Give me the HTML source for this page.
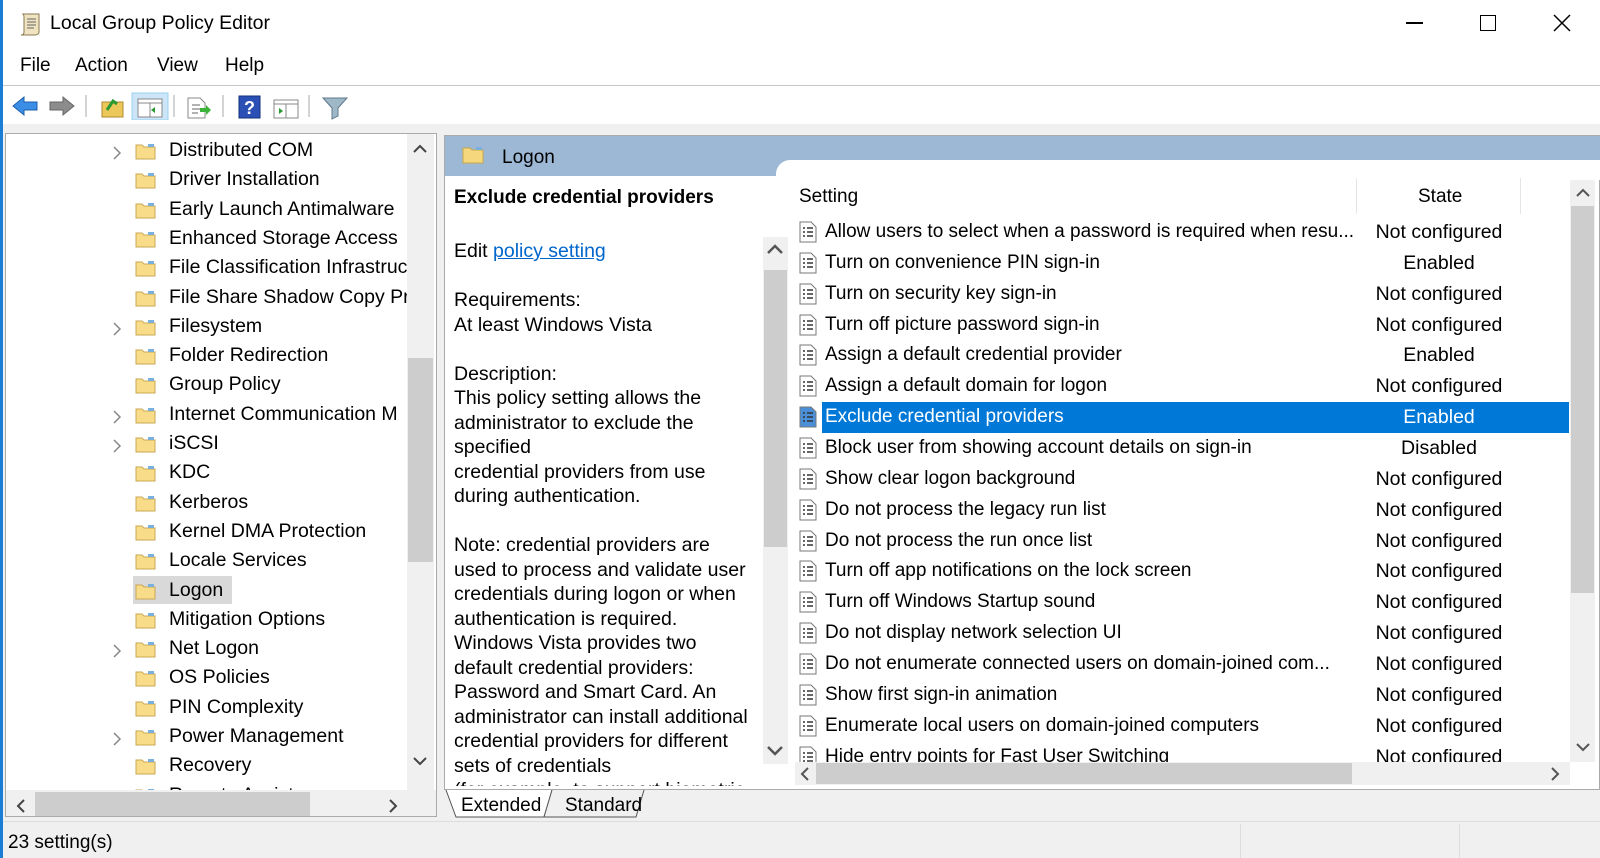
<!DOCTYPE html>
<html><head><meta charset="utf-8"><style>
*{margin:0;padding:0;box-sizing:border-box}
body{width:1600px;height:858px;overflow:hidden;background:#f0f0f0;font-family:"Liberation Sans",sans-serif;font-size:17.5px;color:#000;position:relative}
.a{position:absolute;white-space:nowrap}
.fold{position:absolute;width:21px;height:18px}
.sb{position:absolute;background:#f0f0f0}
.th{position:absolute;background:#cdcdcd}
</style></head><body>
<div class="a" style="left:0;top:0;width:1600px;height:124px;background:#fff"></div>
<div class="a" style="left:0;top:0;width:3px;height:858px;background:#1a7fd4"></div>
<svg class="a" style="left:17px;top:11px" width="26" height="26" viewBox="0 0 26 26"><path d="M6 3h16v18c0 2-2 3-4 3H4c2 0 3-1 3-3V6C7 4 6 3 6 3z" fill="#efe3c0" stroke="#8a7a50"/><path d="M10 8h9M10 11h9M10 14h9M10 17h7" stroke="#666"/></svg>
<div class="a" style="left:50px;top:12px;font-size:19.5px">Local Group Policy Editor</div>
<div class="a" style="left:1406px;top:22px;width:17px;height:1.5px;background:#000"></div>
<div class="a" style="left:1480px;top:15px;width:16px;height:16px;border:1.5px solid #000"></div>
<svg class="a" style="left:1553px;top:14px" width="18" height="18"><path d="M1 1L17 17M17 1L1 17" stroke="#000" stroke-width="1.5"/></svg>
<div class="a" style="left:20px;top:55px;font-size:19px">File</div>
<div class="a" style="left:75px;top:55px;font-size:19px">Action</div>
<div class="a" style="left:157px;top:55px;font-size:19px">View</div>
<div class="a" style="left:225px;top:55px;font-size:19px">Help</div>
<div class="a" style="left:3px;top:85px;width:1597px;height:1px;background:#c8c8c8"></div>
<svg class="a" style="left:10px;top:92px" width="345" height="28" viewBox="0 0 345 28">
<path d="M3 14l11-9v5h13v8H14v5z" fill="#3a8ee6" stroke="#1d5fae"/>
<path d="M64 14L53 5v5H40v8h13v5z" fill="#8c8c8c" stroke="#666"/>
<path d="M76 3v22" stroke="#aaa"/>
<rect x="92" y="10" width="21" height="15" fill="#ecc75a" stroke="#b08a30"/><path d="M97 18l6-9 4 3" stroke="#2a9a30" stroke-width="3" fill="none"/>
<rect x="122" y="1" width="36" height="27" fill="#cde6f7" stroke="#99d0f0"/><rect x="128" y="7" width="24" height="18" fill="#fff" stroke="#888"/><path d="M128 11h24M140 11v14" stroke="#888"/><path d="M145 15l-4 3 4 3z" fill="#2a9a30"/>
<path d="M164 3v22" stroke="#aaa"/>
<path d="M178 6h12l5 5v15h-17z" fill="#fff" stroke="#888"/><path d="M182 13h8M182 17h8M182 21h6" stroke="#666"/><path d="M190 16h6v-3l5 5-5 5v-3h-6z" fill="#3bb33b"/>
<path d="M213 3v22" stroke="#aaa"/>
<rect x="229" y="4" width="21" height="22" fill="#2a4fb5" stroke="#12307a"/><text x="234" y="22" fill="#fff" font-size="18" font-weight="bold" font-family="Liberation Sans">?</text>
<rect x="264" y="8" width="24" height="18" fill="#fff" stroke="#888"/><path d="M264 12h24M276 12v14" stroke="#888"/><path d="M269 16l4 3-4 3z" fill="#2a9a30"/>
<path d="M299 3v22" stroke="#aaa"/>
<path d="M313 6h24l-9 10v8l-6 3V16z" fill="#9fb8c8" stroke="#5f7a8c"/>
</svg>
<div class="a" style="left:5px;top:133px;width:432px;height:684px;background:#fff;border:1px solid #aaa;overflow:hidden">
 <div class="a" style="left:127px;top:442px;width:99px;height:28px;background:#d9d9d9"></div>
 <div id="tree"></div>
</div>
<div class="a" style="left:444px;top:135px;width:1156px;height:655px;background:#fff;border:1px solid #aaa"></div>
<div class="a" style="left:445px;top:136px;width:1155px;height:40px;background:#9cb8d5"></div>
<div class="a" style="left:776px;top:160px;width:824px;height:20px;background:#fff;border-top-left-radius:14px"></div>
<svg class="a" style="left:462px;top:145px" width="22" height="19"><path d="M1 3h7l2 2h11v13H1z" fill="#f5d77e" stroke="#c9a74a"/><rect x="14" y="2" width="6" height="3" fill="#7ab0e0"/></svg>
<div class="a" style="left:502px;top:147px;font-size:19px">Logon</div>
<div class="a" style="left:454px;top:187px;font-weight:bold;font-size:19px">Exclude credential providers</div>
<div class="a" style="left:454px;top:240px;font-size:19.5px">Edit <span style="color:#0066cc;text-decoration:underline">policy setting </span></div>
<div class="a" style="left:454px;top:288px;width:305px;height:498px;overflow:hidden;font-size:19.5px;line-height:24.5px">Requirements:<br>At least Windows Vista<br><br>Description:<br>This policy setting allows the<br>administrator to exclude the<br>specified<br>credential providers from use<br>during authentication.<br><br>Note: credential providers are<br>used to process and validate user<br>credentials during logon or when<br>authentication is required.<br>Windows Vista provides two<br>default credential providers:<br>Password and Smart Card. An<br>administrator can install additional<br>credential providers for different<br>sets of credentials<br>(for example, to support biometric</div>
<div class="sb" style="left:763px;top:237px;width:25px;height:527px"></div>
<div class="th" style="left:764px;top:270px;width:23px;height:277px"></div>
<svg class="a" style="left:766px;top:242px" width="18" height="14"><path d="M2 11l7-7 7 7" stroke="#555" stroke-width="2.5" fill="none"/></svg>
<svg class="a" style="left:766px;top:744px" width="18" height="14"><path d="M2 3l7 7 7-7" stroke="#555" stroke-width="2.5" fill="none"/></svg>
<div class="a" style="left:799px;top:186px;font-size:19px">Setting</div>
<div class="a" style="left:1418px;top:186px;font-size:19px">State</div>
<div class="a" style="left:1356px;top:178px;width:1px;height:36px;background:#e5e5e5"></div>
<div class="a" style="left:1520px;top:178px;width:1px;height:36px;background:#e5e5e5"></div>
<div class="a" style="left:795px;top:216px;width:774px;height:546px;overflow:hidden">
 <div class="a" style="left:27px;top:186px;width:747px;height:31px;background:#0078d7"></div>
 <div id="list"></div>
</div>
<div class="sb" style="left:1570px;top:180px;width:25px;height:582px"></div>
<div class="th" style="left:1571px;top:206px;width:23px;height:387px"></div>
<svg class="a" style="left:1574px;top:186px" width="18" height="14"><path d="M3 10l6-6 6 6" stroke="#555" stroke-width="2" fill="none"/></svg>
<svg class="a" style="left:1574px;top:740px" width="18" height="14"><path d="M3 4l6 6 6-6" stroke="#555" stroke-width="2" fill="none"/></svg>
<div class="sb" style="left:795px;top:762px;width:775px;height:23px"></div>
<div class="th" style="left:816px;top:763px;width:536px;height:21px"></div>
<svg class="a" style="left:799px;top:766px" width="12" height="16"><path d="M9 2L3 8l6 6" stroke="#555" stroke-width="2" fill="none"/></svg>
<svg class="a" style="left:1549px;top:766px" width="12" height="16"><path d="M3 2l6 6-6 6" stroke="#555" stroke-width="2" fill="none"/></svg>
<svg class="a" style="left:444px;top:790px" width="225" height="30"><path d="M2 0l10 27h88l8-27" fill="#fff" stroke="#555"/><path d="M108 0l-8 27h92l8-27" fill="#f0f0f0" stroke="#555"/></svg>
<div class="a" style="left:461px;top:795px;font-size:19px">Extended</div>
<div class="a" style="left:565px;top:795px;font-size:19px">Standard</div>
<div class="a" style="left:3px;top:821px;width:1597px;height:1px;background:#ddd"></div>
<div class="a" style="left:1240px;top:824px;width:1px;height:34px;background:#ddd"></div>
<div class="a" style="left:1459px;top:824px;width:1px;height:34px;background:#ddd"></div>
<div class="a" style="left:8px;top:832px;font-size:19px">23 setting(s)</div>
<script>
var t=[["Distributed COM",1],["Driver Installation"],["Early Launch Antimalware"],["Enhanced Storage Access"],["File Classification Infrastruct"],["File Share Shadow Copy Pro"],["Filesystem",1],["Folder Redirection"],["Group Policy"],["Internet Communication M",1],["iSCSI",1],["KDC"],["Kerberos"],["Kernel DMA Protection"],["Locale Services"],["Logon"],["Mitigation Options"],["Net Logon",1],["OS Policies"],["PIN Complexity"],["Power Management",1],["Recovery"],["Remote Assistance"]];
var h='';t.forEach(function(e,i){var y=3+i*29.3;
if(e[1])h+='<svg class="a" style="left:106px;top:'+(y+9)+'px" width="10" height="14"><path d="M2 1l6 6-6 6" stroke="#888" stroke-width="1.5" fill="none"/></svg>';
h+='<svg class="fold" style="left:129px;top:'+(y+5)+'px" viewBox="0 0 21 18"><path d="M1 3h6l2 2h11v12H1z" fill="#f8dc8a" stroke="#caa750"/><rect x="13" y="2" width="6" height="3" fill="#7ab0e0"/></svg>';
h+='<div class="a" style="left:163px;top:'+(y+2)+'px;font-size:19.5px;width:238px;overflow:hidden">'+e[0]+'</div>';});
h+='<div class="sb" style="left:401px;top:0;width:27px;height:656px"></div><div class="th" style="left:402px;top:224px;width:25px;height:204px"></div>';
h+='<svg class="a" style="left:405px;top:9px" width="18" height="12"><path d="M3 9l6-6 6 6" stroke="#444" stroke-width="2" fill="none"/></svg>';
h+='<svg class="a" style="left:405px;top:621px" width="18" height="12"><path d="M3 3l6 6 6-6" stroke="#444" stroke-width="2" fill="none"/></svg>';
h+='<div class="sb" style="left:0;top:656px;width:432px;height:28px"></div><div class="th" style="left:29px;top:658px;width:275px;height:24px"></div>';
h+='<svg class="a" style="left:9px;top:664px" width="12" height="16"><path d="M9 2L3 8l6 6" stroke="#444" stroke-width="2" fill="none"/></svg><svg class="a" style="left:381px;top:664px" width="12" height="16"><path d="M3 2l6 6-6 6" stroke="#444" stroke-width="2" fill="none"/></svg>';
document.getElementById('tree').innerHTML=h;
var L=[["Allow users to select when a password is required when resu...","Not configured"],["Turn on convenience PIN sign-in","Enabled"],["Turn on security key sign-in","Not configured"],["Turn off picture password sign-in","Not configured"],["Assign a default credential provider","Enabled"],["Assign a default domain for logon","Not configured"],["Exclude credential providers","Enabled"],["Block user from showing account details on sign-in","Disabled"],["Show clear logon background","Not configured"],["Do not process the legacy run list","Not configured"],["Do not process the run once list","Not configured"],["Turn off app notifications on the lock screen","Not configured"],["Turn off Windows Startup sound","Not configured"],["Do not display network selection UI","Not configured"],["Do not enumerate connected users on domain-joined com...","Not configured"],["Show first sign-in animation","Not configured"],["Enumerate local users on domain-joined computers","Not configured"],["Hide entry points for Fast User Switching","Not configured"]];
var g='';L.forEach(function(e,i){var y=i*30.86;var s=i==6;var c=s?'#fff':'#000';
g+='<svg class="a" style="left:4px;top:'+(y+5)+'px" width="18" height="22" viewBox="0 0 18 22"><path d="M1 1h11l5 5v15H1z" fill="'+(s?'#4a8fd8':'#fff')+'" stroke="#777"/><path d="M4 7h2M8 7h6M4 11h2M8 11h6M4 15h2M8 15h6" stroke="#333" stroke-width="1.5"/></svg>';
g+='<div class="a" style="left:30px;top:'+(y+5)+'px;color:'+c+';font-size:19px">'+e[0]+'</div>';
g+='<div class="a" style="left:549px;width:190px;text-align:center;top:'+(y+5)+'px;color:'+c+';font-size:19.5px">'+e[1]+'</div>';});
document.getElementById('list').innerHTML=g;
</script>
</body></html>
